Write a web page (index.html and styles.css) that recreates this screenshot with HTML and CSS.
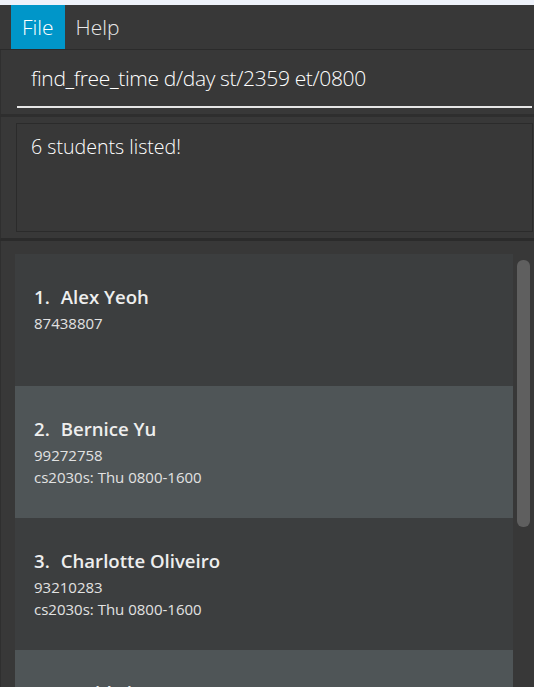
FILE: index.html
```html
<!DOCTYPE html>
<html>
<head>
<meta charset="utf-8">
<link rel="stylesheet" href="styles.css">
</head>
<body>
<div class="topstrip"></div>
<div class="app">
  <div class="menubar">
    <div class="menu-item active">File</div>
    <div class="menu-item">Help</div>
  </div>
  <div class="command-pane">
    <div class="command-field">find_free_time d/day st/2359 et/0800</div>
  </div>
  <div class="result-pane">
    <div class="result-box">6 students listed!</div>
  </div>
  <div class="list-pane">
    <div class="list">
      <div class="card odd">
        <div class="card-title"><span class="idx">1.</span>Alex Yeoh</div>
        <div class="card-line">87438807</div>
      </div>
      <div class="card even">
        <div class="card-title"><span class="idx">2.</span>Bernice Yu</div>
        <div class="card-line">99272758</div>
        <div class="card-line">cs2030s: Thu 0800-1600</div>
      </div>
      <div class="card odd">
        <div class="card-title"><span class="idx">3.</span>Charlotte Oliveiro</div>
        <div class="card-line">93210283</div>
        <div class="card-line">cs2030s: Thu 0800-1600</div>
      </div>
      <div class="card even">
        <div class="card-title"><span class="idx">4.</span>David Li</div>
        <div class="card-line">91031282</div>
      </div>
    </div>
    <div class="scrollbar"><div class="thumb"></div></div>
  </div>
</div>
</body>
</html>
```

FILE: styles.css
```css
html, body {
  margin: 0;
  padding: 0;
  background: #383838;
  overflow: hidden;
}
body {
  font-family: "Open Sans", "Noto Sans", sans-serif;
  color: #ffffff;
}
.topstrip {
  height: 5px;
  background: #eef2fa;
}
.app {
  height: 682px;
  background: #383838;
  display: flex;
  flex-direction: column;
}
.menubar {
  height: 44px;
  display: flex;
  padding-left: 11px;
  background: #383838;
  border-bottom: 1px solid #2b2b2b;
}
.menu-item {
  display: flex;
  align-items: center;
  padding: 0 11px;
  font-size: 21px;
  color: #e8e8e8;
  font-weight: 300;
}
.menu-item.active {
  background: #0096c9;
  color: #ffffff;
}
.command-pane {
  height: 67px;
  box-sizing: border-box;
  padding: 0 2px 0 16px;
  border-left: 1px solid #2f2f2f;
  border-bottom: 3px solid #2e2e2e;
  display: flex;
  align-items: flex-end;
}
.command-field {
  flex: 1;
  height: 56px;
  box-sizing: border-box;
  padding: 12px 0 0 14px;
  font-size: 21px;
  font-weight: 300;
  color: #ffffff;
  border-bottom: 2px solid #e6e6e6;
  margin-bottom: 6px;
  letter-spacing: -0.35px;
}
.result-pane {
  height: 124px;
  box-sizing: border-box;
  padding: 6px 0 0 15px;
  border-bottom: 3px solid #2b2b2b;
  border-left: 1px solid #2f2f2f;
}
.result-box {
  width: 517px;
  height: 109px;
  box-sizing: border-box;
  border: 1px solid #2b2b2b;
  padding: 9px 0 0 14px;
  font-size: 19.6px;
  font-weight: 300;
  color: #ffffff;
}
.list-pane {
  flex: 1;
  display: flex;
  padding: 13px 0 0 14px;
  border-left: 1px solid #2f2f2f;
  overflow: hidden;
}
.list {
  width: 498px;
  display: flex;
  flex-direction: column;
}
.card {
  height: 132px;
  flex: none;
  box-sizing: border-box;
  padding: 31px 0 0 19px;
  color: #ffffff;
}
.card.odd { background: #3c3e3f; }
.card.even { background: #4f5557; }
.card-title {
  font-size: 18.6px;
  font-weight: 600;
  color: #eeeeee;
  line-height: 24px;
  margin-bottom: 3px;
}
.idx {
  margin-right: 11px;
}
.card-line {
  font-size: 15px;
  color: #e2e2e2;
  line-height: 22px;
}
.scrollbar {
  width: 21px;
  display: flex;
  justify-content: center;
  padding-top: 6px;
}
.thumb {
  width: 13px;
  height: 267px;
  border-radius: 6px;
  background: #5f5f5f;
}
```
